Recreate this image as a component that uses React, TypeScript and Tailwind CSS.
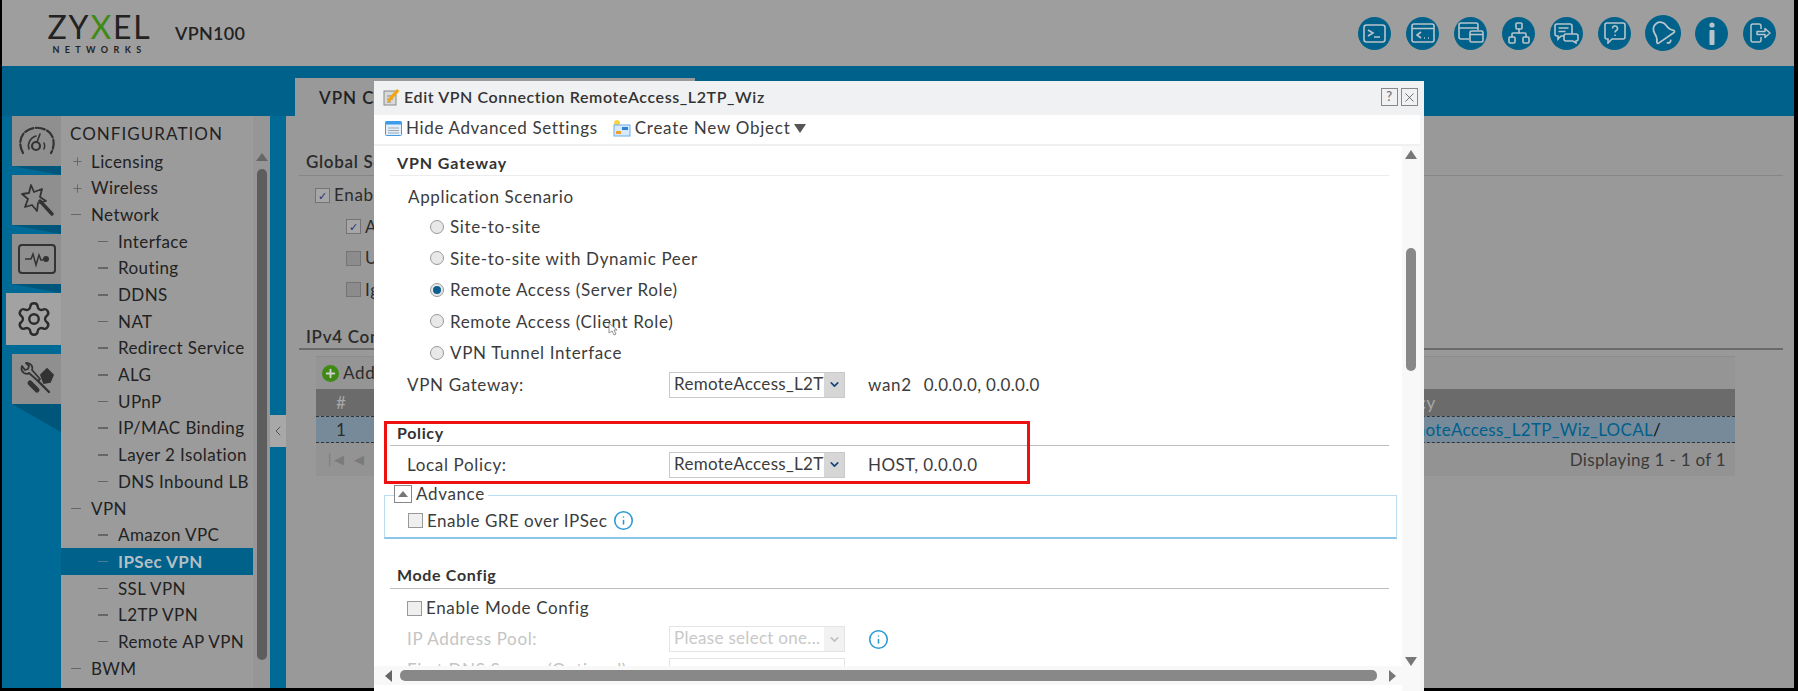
import React from "react";
import { Settings, Network, Bell, Info, Plus, ChevronLeft, ChevronDown, X } from "lucide-react";

const menu: { label: string; level: 0 | 1; open?: boolean; active?: boolean }[] = [
  { label: "Licensing", level: 0 },
  { label: "Wireless", level: 0 },
  { label: "Network", level: 0, open: true },
  { label: "Interface", level: 1 },
  { label: "Routing", level: 1 },
  { label: "DDNS", level: 1 },
  { label: "NAT", level: 1 },
  { label: "Redirect Service", level: 1 },
  { label: "ALG", level: 1 },
  { label: "UPnP", level: 1 },
  { label: "IP/MAC Binding", level: 1 },
  { label: "Layer 2 Isolation", level: 1 },
  { label: "DNS Inbound LB", level: 1 },
  { label: "VPN", level: 0, open: true },
  { label: "Amazon VPC", level: 1 },
  { label: "IPSec VPN", level: 1, active: true },
  { label: "SSL VPN", level: 1 },
  { label: "L2TP VPN", level: 1 },
  { label: "Remote AP VPN", level: 1 },
  { label: "BWM", level: 0, open: true },
  { label: "Web Authentication", level: 1 },
];

const scenarios = [
  "Site-to-site",
  "Site-to-site with Dynamic Peer",
  "Remote Access (Server Role)",
  "Remote Access (Client Role)",
  "VPN Tunnel Interface",
];

function HeaderIcons() {
  const icon = "w-[33px] h-[33px] rounded-full bg-[#00628a] flex items-center justify-center text-[#b9c4ca]";
  return (
    <div className="flex items-center gap-[15px]">
      <div className={icon}>
        <svg width="23" height="19" viewBox="0 0 23 19" fill="none" stroke="currentColor" strokeWidth="1.6">
          <rect x="1" y="1" width="21" height="17" rx="2.5" />
          <path d="M5 6l5 3-5 3M11 13h6" />
        </svg>
      </div>
      <div className={icon}>
        <svg width="24" height="20" viewBox="0 0 24 20" fill="none" stroke="currentColor" strokeWidth="1.6">
          <rect x="1" y="1" width="22" height="18" rx="2" />
          <path d="M1 5.5h22M10 9l-4 3 4 3M13 15h1M17 15h1" />
        </svg>
      </div>
      <div className={icon}>
        <svg width="26" height="22" viewBox="0 0 26 22" fill="none" stroke="currentColor" strokeWidth="1.6">
          <path d="M11 17H3a2 2 0 0 1-2-2V3a2 2 0 0 1 2-2h15a2 2 0 0 1 2 2v5M1 6h19" />
          <rect x="12" y="9" width="13" height="11" rx="1.5" fill="#00628a" />
          <path d="M12 12.5h13" />
        </svg>
      </div>
      <div className={icon}>
        <Network size={24} strokeWidth={1.6} />
      </div>
      <div className={icon}>
        <svg width="25" height="21" viewBox="0 0 25 21" fill="none" stroke="currentColor" strokeWidth="1.6">
          <path d="M3 1h13a2 2 0 0 1 2 2v8a2 2 0 0 1-2 2H7l-3 3v-3H3a2 2 0 0 1-2-2V3a2 2 0 0 1 2-2zM4.5 5h10M4.5 8.500h7" />
          <path d="M12 11h10a2 2 0 0 1 2 2v3a2 2 0 0 1-2 2v2l-3-2h-7a2 2 0 0 1-2-2v-3a2 2 0 0 1 2-2z" fill="#00628a" />
        </svg>
      </div>
      <div className={icon}>
        <svg width="22" height="22" viewBox="0 0 22 22" fill="none" stroke="currentColor" strokeWidth="1.6">
          <path d="M3 1h16a2 2 0 0 1 2 2v12a2 2 0 0 1-2 2H8l-4 4v-4H3a2 2 0 0 1-2-2V3a2 2 0 0 1 2-2z" />
          <path d="M8.500 6.500a2.500 2.500 0 1 1 3.500 2.300c-.8.400-1 .9-1 1.700M11 12.500v1.500" />
        </svg>
      </div>
      <div className={`${icon} w-[36px] h-[36px] -mx-[1px] -rotate-[35deg]`}>
        <Bell size={28} strokeWidth={1.5} />
      </div>
      <div className={icon}>
        <svg width="10" height="23" viewBox="0 0 10 23" fill="currentColor">
          <circle cx="5" cy="3" r="2.600" />
          <rect x="2.500" y="8" width="5" height="15" rx="1" />
        </svg>
      </div>
      <div className={icon}>
        <svg width="24" height="24" viewBox="0 0 24 24" fill="none" stroke="currentColor" strokeWidth="1.5" strokeLinejoin="round">
          <path d="M13 8V5a2 2 0 0 0-2-2H5a2 2 0 0 0-2 2v14a2 2 0 0 0 2 2h6a2 2 0 0 0 2-2v-3" />
          <path d="M9 10.500h8V7.500l5 4.500-5 4.500v-3H9z" />
        </svg>
      </div>
    </div>
  );
}

function Fold({ tall }: { tall?: boolean }) {
  return (
    <svg className="absolute top-full left-0" width="49" height={tall ? 30 : 9} viewBox={`0 0 49 ${tall ? 30 : 9}`}>
      <polygon points={tall ? "0,0 49,0 49,28" : "0,0 49,0 49,9"} fill="#00557a" />
    </svg>
  );
}

function SideTabs() {
  const tab = "relative w-[49px] h-[50px] ml-[10px] bg-[#8f8f8f] flex items-center justify-center text-[#333]";
  return (
    <div className="w-[59px] shrink-0 flex flex-col gap-[9px]">
      <div className={tab}>
        <svg width="38" height="30" viewBox="0 0 38 30" fill="none" stroke="currentColor" strokeWidth="2.200" strokeLinecap="round">
          <path d="M5 27C1 20 1.500 12 6 7c7-7 19-7 26 0 4.500 5 5 13 1 20" strokeDasharray="9 2.500" />
          <circle cx="18" cy="20" r="4" />
          <path d="M19 16l3-8M11 23c-2-6 2-12 7-13M26 23c1-2 1-4 0-6" strokeWidth="1.600" />
        </svg>
        <Fold />
      </div>
      <div className={tab}>
        <svg width="34" height="34" viewBox="0 0 34 34" fill="none" stroke="currentColor">
          <path d="M11 2l3 7 8-3-2 8 6 4-8 2-1 8-5-6-7 2 3-8-6-5 7-1z" strokeWidth="1.800" strokeLinejoin="round" />
          <path d="M20 18l12 13" strokeWidth="3.400" strokeLinecap="round" />
        </svg>
        <Fold />
      </div>
      <div className={tab}>
        <svg width="38" height="30" viewBox="0 0 38 30" fill="none" stroke="currentColor" strokeWidth="2">
          <rect x="1" y="1" width="36" height="28" rx="3" />
          <path d="M7 15h6l2-5 3 11 3-10 2 5h2" strokeWidth="1.500" />
          <circle cx="28" cy="15" r="2" fill="currentColor" />
        </svg>
        <Fold />
      </div>
      <div className="relative w-[55px] h-[52px] ml-[4px] bg-[#a2a2a2] flex items-center justify-center text-[#2b2b2b]">
        <Settings size={38} strokeWidth={1.5} />
      </div>
      <div className={tab}>
        <svg width="36" height="34" viewBox="0 0 36 34" fill="none" stroke="currentColor" strokeWidth="1.800" strokeLinecap="round">
          <path d="M3 4a6 6 0 0 0 2 7c2 1 4 1 5 0l9 8 2-2-8-9c1-2 0-5-2-6s-3-1-4-1l3 3-1 3-3 1z" strokeLinejoin="round" />
          <path d="M22 13l6-6 6 6-3 7-6 1z" fill="currentColor" />
          <path d="M11 21l7 7" strokeWidth="5" />
          <path d="M19 19l11 11" strokeWidth="2.400" />
        </svg>
        <Fold tall />
      </div>
    </div>
  );
}

function Sidebar() {
  return (
    <div className="w-[209px] shrink-0 bg-[#9b9b9b] flex overflow-hidden">
      <div className="w-[192px] shrink-0 pt-[3px]">
        <div className="pl-[9px] h-[29px] flex items-center text-[17px] text-[#222] tracking-[1.050px]">CONFIGURATION</div>
        <div>
          {menu.map((item) => (
            <div
              key={item.label}
              className={`h-[26.700px] flex items-center whitespace-nowrap text-[17px] tracking-[0.4px] ${
                item.active ? "bg-[#00618a] text-[#b4bfc4] font-bold" : "text-[#222]"
              } ${item.level === 0 ? "pl-[10px]" : "pl-[37px]"}`}
            >
              {item.level === 0 && !item.open ? (
                <Plus size={13} strokeWidth={1.300} className="text-[#555] mr-[7px]" />
              ) : (
                <span className={`w-[10px] h-[1.500px] mr-[10px] ${item.active ? "bg-[#4b7f95]" : "bg-[#666]"}`} />
              )}
              {item.label}
            </div>
          ))}
        </div>
      </div>
      <div className="flex-1 flex flex-col items-center pt-[37px] bg-[#969696]">
        <span className="w-0 h-0 border-x-[6px] border-x-transparent border-b-[8px] border-b-[#666]" />
        <span className="w-[10px] h-[491px] mt-[8px] rounded-[5px] bg-[#5d5d5d]" />
      </div>
    </div>
  );
}

function BackgroundPanel() {
  const box = "w-[15px] h-[15px] border border-[#747474] bg-[#8c8c8c] shrink-0";
  const tick = "w-[15px] h-[15px] border border-[#747474] bg-[#a6a6a6] shrink-0 flex items-center justify-center text-[#28307a] text-[11px] leading-none";
  const row = "h-[16px] flex items-center gap-[4px] whitespace-nowrap";
  return (
    <div className="flex-1 bg-[#999999] pl-[13px] pr-[11px] text-[#2b2b2b] text-[17px] tracking-[0.7px] overflow-hidden">
      <div className="h-[60px] pl-[7px] flex items-end pb-[3px] leading-[20px] border-b border-[#868686] font-semibold">Global Setting</div>
      <div className="pl-[17px] pt-[11px] h-[124px] flex flex-col gap-[15.500px]">
        <div className={`${row} -ml-[1px]`}><span className={tick}>✓</span>Enable</div>
        <div className={`${row} pl-[30px]`}><span className={tick}>✓</span>Allow</div>
        <div className={`${row} pl-[30px]`}><span className={box} />Use</div>
        <div className={`${row} pl-[30px]`}><span className={box} />Ignore</div>
      </div>
      <div className="h-[50px] pl-[7px] flex items-end pb-[1px] leading-[20px] border-b-2 border-[#6a6a6a] font-semibold">IPv4 Configuration</div>
      <div className="ml-[17px] mr-[48px] mt-[6px] border-t border-[#8c8c8c]">
        <div className="h-[32px] pl-[6px] flex items-center gap-[4px] bg-[#959595]">
          <span className="w-[17px] h-[17px] rounded-full bg-[#3f8a14] flex items-center justify-center text-[#cfcfcf]">
            <Plus size={13} strokeWidth={3.500} />
          </span>
          Add
        </div>
        <div className="h-[27px] bg-[#6b6b6b] text-[#a8a8a8] flex items-center justify-between pl-[20px]">
          <span>#</span>
          <span className="mr-[299px]">Policy</span>
        </div>
        <div className="h-[27px] bg-[#778a99] border-y border-dashed border-[#333] flex items-center justify-between pl-[20px]">
          <span>1</span>
          <span className="mr-[74px] tracking-[0.3px] text-[#00608c]">RemoteAccess_L2TP_Wiz_LOCAL<span className="text-[#111]">/</span></span>
        </div>
        <div className="h-[33px] bg-[#939393] flex items-center justify-between pl-[12px] pr-[9px] text-[#3a3a3a]">
          <span className="text-[#7b7b7b] text-[13px] tracking-[3px]">|◀ ◀</span>
          <span className="tracking-[0.3px]">Displaying 1 - 1 of 1</span>
        </div>
      </div>
    </div>
  );
}

function Radio({ label, checked }: { label: string; checked?: boolean }) {
  return (
    <div className="h-[31.500px] flex items-center pl-[56px]">
      <span className="w-[14px] h-[14px] rounded-full border border-[#999] bg-[#e8e8e8] mr-[6px] flex items-center justify-center">
        {checked && <span className="w-[8px] h-[8px] rounded-full bg-[#0b5f8f]" />}
      </span>
      {label}
    </div>
  );
}

function FakeSelect({ value, disabled }: { value: string; disabled?: boolean }) {
  return (
    <div
      className={`w-[176px] h-[26px] shrink-0 flex border mr-[23px] ${
        disabled ? "border-[#e4e4e4] text-[#c8c8c8]" : "border-[#c9c9c9] text-[#3c3c3c]"
      }`}
    >
      <span className="flex-1 min-w-0 pl-[4px] overflow-hidden whitespace-nowrap tracking-[0.3px] leading-[22px]">{value}</span>
      <span className={`w-[20px] shrink-0 flex items-center justify-center ${disabled ? "bg-[#f2f2f2] text-[#c0c0c0]" : "bg-[#d6d6d6] text-[#13457a]"}`}>
        <ChevronDown size={13} strokeWidth={3} />
      </span>
    </div>
  );
}

function SectionTitle({ title, className = "" }: { title: string; className?: string }) {
  return (
    <div className={`ml-[16px] mr-[13px] border-b pl-[7px] font-bold text-[#333] ${className}`}>
      {title}
    </div>
  );
}

function VpnModal() {
  const infoIcon = <Info size={21} strokeWidth={1.800} className="text-[#2b9bd3] shrink-0" />;
  return (
    <div className="absolute left-[374px] top-[81px] w-[1050px] h-[610px] rounded-t-[4px] bg-[#f4f5f6] flex flex-col font-[Lato,sans-serif] text-[17px] text-[#3c3c3c] tracking-[0.65px]">
      <div className="h-[34px] shrink-0 pl-[9px] pr-[6px] pb-[2px] flex items-center bg-[#f0f1f2] text-[16px] text-[#333] font-semibold tracking-[0.6px]">
        <svg width="17" height="18" viewBox="0 0 17 18" className="mr-[4px]">
          <rect x="1" y="3" width="12" height="14" fill="#d9d9d9" stroke="#8a8a8a" />
          <path d="M4 8h6M4 11h6M4 14h4" stroke="#888" />
          <path d="M5 11l9-10 2.500 2-9 10-3 1z" fill="#f2a60d" />
        </svg>
        <span className="flex-1">Edit VPN Connection RemoteAccess_L2TP_Wiz</span>
        <span className="w-[17px] h-[18px] mr-[3px] border border-[#888] flex items-center justify-center text-[13px] text-[#777]">?</span>
        <span className="w-[17px] h-[18px] border border-[#888] flex items-center justify-center text-[#555]">
          <X size={15} strokeWidth={1.300} />
        </span>
      </div>
      <div className="h-[31px] shrink-0 bg-white border-b-2 border-[#f0f0f0] pb-[3px] flex items-center pl-[11px] mr-[4px]">
        <svg width="17" height="15" viewBox="0 0 17 15" className="mr-[4px]">
          <rect x="0.500" y="0.500" width="16" height="14" rx="1" fill="#e3eefb" stroke="#3f9be8" />
          <rect x="0.500" y="0.500" width="16" height="3" fill="#3f9be8" />
          <path d="M3 7h11M3 9.500h11M3 12h11" stroke="#9fa9b3" />
        </svg>
        <span className="mr-[15px]">Hide Advanced Settings</span>
        <svg width="18" height="18" viewBox="0 0 18 18" className="mr-[4px]">
          <circle cx="4" cy="4" r="3" fill="#f5d547" />
          <rect x="1" y="6" width="16" height="11" fill="#d7eafc" stroke="#6aaee8" />
          <rect x="9" y="8" width="6" height="3" fill="#2f80d0" />
          <rect x="3" y="12" width="5" height="3" fill="#f0a030" />
        </svg>
        <span className="tracking-[0.75px]">Create New Object</span>
        <span className="ml-[3px] w-0 h-0 border-x-[6px] border-x-transparent border-t-[9px] border-t-[#555]" />
      </div>
      <div className="flex-1 flex min-h-0">
        <div className="flex-1 flex flex-col min-w-0 bg-white">
          <div className="flex-1 min-h-0 overflow-hidden">
            <SectionTitle title="VPN Gateway" className="h-[30px] pt-[5px] leading-[24px] border-[#ececec] text-[16px] tracking-[0.9px]" />
            <div className="pl-[34px] h-[42px] flex items-center">Application Scenario</div>
            <div className="-mt-[7px]">
              {scenarios.map((s) => (
                <Radio key={s} label={s} checked={s === "Remote Access (Server Role)"} />
              ))}
            </div>
            <div className="h-[32px] flex items-center pl-[33px]">
              <span className="w-[262px] shrink-0">VPN Gateway:</span>
              <FakeSelect value="RemoteAccess_L2TP_Wiz" />
              <span className="mr-[12px]">wan2</span>
              <span className="tracking-[0.3px]">0.0.0.0, 0.0.0.0</span>
            </div>
            <SectionTitle title="Policy" className="mt-[21px] h-[24px] leading-[22px] border-[#bdbdbd] text-[16px]" />
            <div className="h-[32px] flex items-center pl-[33px] mt-[3px]">
              <span className="w-[262px] shrink-0">Local Policy:</span>
              <FakeSelect value="RemoteAccess_L2TP_Wiz_LOCAL" />
              <span className="tracking-[0.4px]">HOST, 0.0.0.0</span>
            </div>
            <div className="relative ml-[10px] mr-[5px] mt-[14px] h-[44px] border border-[#b9dcf3] border-b-2 border-b-[#8cc5ea] pl-[23px] pt-[15px]">
              <span className="absolute -top-[11px] left-[9px] h-[18px] bg-white flex items-center pr-[3px]">
                <span className="w-[18px] h-[18px] border border-[#888] mr-[4px] flex items-center justify-center">
                  <span className="w-0 h-0 border-x-[5px] border-x-transparent border-b-[6px] border-b-[#777]" />
                </span>
                Advance
              </span>
              <div className="h-[20px] flex items-center">
                <span className="w-[15px] h-[15px] border border-[#999] bg-[#efefef] mr-[4px] shrink-0" />
                <span className="mr-[6px] tracking-[0.5px]">Enable GRE over IPSec</span>
                {infoIcon}
              </div>
            </div>
            <SectionTitle title="Mode Config" className="mt-[25px] h-[25px] leading-[22px] border-[#bdbdbd] text-[16px]" />
            <div className="h-[27px] mt-[6px] flex items-center pl-[33px]">
              <span className="w-[15px] h-[15px] border border-[#999] bg-[#efefef] mr-[4px]" />
              Enable Mode Config
            </div>
            <div className="h-[31px] flex items-center pl-[33px] text-[#c4c4c4] mt-[2px]">
              <span className="w-[262px] shrink-0">IP Address Pool:</span>
              <FakeSelect value="Please select one..." disabled />
              {infoIcon}
            </div>
            <div className="h-[31px] flex items-center pl-[33px] text-[#c4c4c4]">
              <span className="w-[262px] shrink-0">First DNS Server (Optional):</span>
              <span className="w-[176px] h-[25px] border border-[#e4e4e4]" />
            </div>
          </div>
          <div className="h-[19px] shrink-0 bg-[#f8f8f8] flex items-center pl-[11px] pr-[6px] mb-[6px]">
            <span className="w-0 h-0 border-y-[6px] border-y-transparent border-r-[7px] border-r-[#666] mr-[8px]" />
            <span className="flex-1 h-[11px] rounded-[5px] bg-[#888888]" />
            <span className="w-0 h-0 border-y-[6px] border-y-transparent border-l-[7px] border-l-[#777] ml-[12px]" />
          </div>
        </div>
        <div className="w-[18px] shrink-0 bg-[#f8f8f8] flex flex-col items-center pt-[4px] pb-[25px] mr-[4px]">
          <span className="w-0 h-0 border-x-[6px] border-x-transparent border-b-[9px] border-b-[#777]" />
          <span className="w-[10px] h-[123px] mt-[89px] rounded-[5px] bg-[#888888]" />
          <span className="mt-auto w-0 h-0 border-x-[6px] border-x-transparent border-t-[9px] border-t-[#777]" />
        </div>
      </div>
    </div>
  );
}

export default function App() {
  return (
    <div className="relative w-[1798px] h-[691px] bg-black pl-[2px] pr-[4px] pb-[3px] overflow-hidden flex flex-col font-[Lato,sans-serif]">
      <div className="h-[66px] shrink-0 bg-[#9e9e9e] flex items-center justify-between pl-[46px] pr-[18px]">
        <div className="flex items-center text-[#222]">
          <div className="w-[103px] flex flex-col items-center mt-[1px]">
            <span className="text-[32px] leading-[30px] tracking-[1.800px] font-normal">
              ZY<span className="text-[#3f8a14]">X</span>EL
            </span>
            <span className="text-[9px] leading-[10px] mt-[3px] tracking-[5.400px] font-bold">NETWORKS</span>
          </div>
          <span className="ml-[24px] text-[18px] tracking-[0.3px] font-semibold">VPN100</span>
        </div>
        <HeaderIcons />
      </div>
      <div className="flex-1 min-h-0 bg-[#00618a] flex flex-col">
        <div className="h-[50px] shrink-0 flex items-end pl-[293px]">
          <div className="w-[400px] h-[38px] bg-[#999999] pl-[24px] pt-[7px] text-[17px] font-semibold text-[#222] tracking-[1px]">VPN Connection</div>
        </div>
        <div className="flex-1 min-h-0 flex bg-[#006a96]">
          <SideTabs />
          <Sidebar />
          <div className="w-[16px] shrink-0 pt-[299px]">
            <div className="h-[32px] bg-[#a8a8a8] flex items-center justify-center text-[#555]">
              <ChevronLeft size={20} strokeWidth={1.500} />
            </div>
          </div>
          <BackgroundPanel />
        </div>
      </div>
      <VpnModal />
      <div className="absolute left-[384px] top-[421px] w-[646px] h-[63px] border-[3px] border-[#ee1111]" />
      <svg className="absolute left-[608px] top-[322px]" width="11" height="15" viewBox="0 0 11 15" fill="#fff" stroke="#777" strokeWidth="0.800">
        <path d="M1 1v10l3-2 2 4 2-1-2-4h3z" />
      </svg>
    </div>
  );
}
